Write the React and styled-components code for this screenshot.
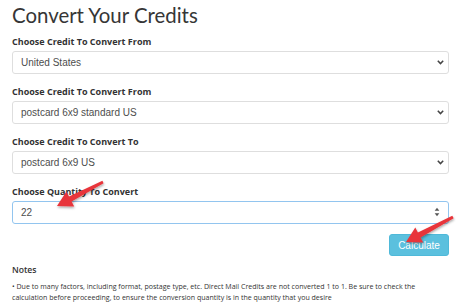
import React from "react";
import styled, { createGlobalStyle } from "styled-components";

const GlobalStyle = createGlobalStyle`
  * { box-sizing: border-box; }
  body {
    margin: 0;
    background: #ffffff;
    font-family: "Open Sans", "Noto Sans", sans-serif;
    color: #333333;
  }
`;

const Page = styled.div`
  position: relative;
  width: 456px;
  height: 306px;
  overflow: hidden;
  padding: 2px 7px 0 12px;
`;

const Title = styled.h2`
  margin: 0 0 6px;
  font-family: Lato, "Open Sans", sans-serif;
  font-size: 20.4px;
  font-weight: 400;
  line-height: 27px;
  color: #363636;
`;

const FormGroup = styled.div`
  margin-bottom: 11px;
`;

const Label = styled.label`
  display: block;
  font-size: 9px;
  font-weight: 700;
  line-height: 13px;
  margin-bottom: 3px;
  color: #333;
`;

const SelectWrap = styled.div`
  position: relative;
`;

const Select = styled.select`
  appearance: none;
  display: block;
  width: 100%;
  height: 23px;
  padding: 0 20px 0 8px;
  border: 1px solid #dedede;
  border-radius: 3px;
  background: #fff;
  font-family: "Liberation Sans", Arial, sans-serif;
  font-size: 10px;
  color: #4d4d4d;
  outline: none;
`;

const Chevron = styled.svg`
  position: absolute;
  right: 5px;
  top: 9px;
  pointer-events: none;
`;

const QuantityInput = styled.input`
  display: block;
  width: 100%;
  height: 23px;
  padding: 0 20px 0 8px;
  border: 1px solid #92c5ef;
  border-radius: 3px;
  background: #fff;
  font-family: "Liberation Sans", Arial, sans-serif;
  font-size: 10px;
  color: #4d4d4d;
  outline: none;
`;

const Spinner = styled.svg`
  position: absolute;
  right: 9px;
  top: 6px;
  pointer-events: none;
`;

const ButtonRow = styled.div`
  display: flex;
  justify-content: flex-end;
  margin-top: -1px;
`;

const CalcButton = styled.button`
  width: 60px;
  height: 22px;
  padding: 0;
  border: 1px solid #4fb9d9;
  border-radius: 3px;
  background: #5bc0de;
  color: #ffffff;
  font-family: "Liberation Sans", Arial, sans-serif;
  font-size: 10px;
`;

const Notes = styled.div`
  margin-top: 8px;
`;

const NotesTitle = styled.div`
  font-size: 8.6px;
  font-weight: 600;
  line-height: 12px;
  color: #333;
`;

const NotesText = styled.p`
  margin: 5px 0 0;
  font-size: 7.05px;
  line-height: 10.7px;
  color: #333;
`;

const ArrowLayer = styled.svg`
  position: absolute;
  left: 0;
  top: 0;
  pointer-events: none;
  overflow: visible;
`;

function arrowPoints(tail, tip) {
  const dx = tip[0] - tail[0];
  const dy = tip[1] - tail[1];
  const len = Math.hypot(dx, dy);
  const ux = dx / len;
  const uy = dy / len;
  const nx = -uy;
  const ny = ux;
  const headLen = 15;
  const headHalf = 8.5;
  const bx = tip[0] - ux * headLen;
  const by = tip[1] - uy * headLen;
  const p = (x, y) => `${x.toFixed(1)},${y.toFixed(1)}`;
  return [
    p(tail[0] + nx * 1.4, tail[1] + ny * 1.4),
    p(bx + nx * 2.8, by + ny * 2.8),
    p(bx + nx * headHalf, by + ny * headHalf),
    p(tip[0], tip[1]),
    p(bx - nx * headHalf, by - ny * headHalf),
    p(bx - nx * 2.8, by - ny * 2.8),
    p(tail[0] - nx * 1.4, tail[1] - ny * 1.4),
  ].join(" ");
}

const arrows = [
  { tail: [103, 182], tip: [57, 206] },
  { tail: [453, 217], tip: [406, 242] },
];

const fields = [
  { label: "Choose Credit To Convert From", value: "United States" },
  { label: "Choose Credit To Convert From", value: "postcard 6x9 standard US" },
  { label: "Choose Credit To Convert To", value: "postcard 6x9 US" },
];

export default function App() {
  return (
    <>
      <GlobalStyle />
      <Page>
        <Title>Convert Your Credits</Title>

        {fields.map((f, i) => (
          <FormGroup key={i}>
            <Label>{f.label}</Label>
            <SelectWrap>
              <Select defaultValue={f.value}>
                <option>{f.value}</option>
              </Select>
              <Chevron width="7" height="5" viewBox="0 0 7 5">
                <path d="M0.8 0.8 L3.5 3.6 L6.2 0.8" fill="none" stroke="#444" strokeWidth="1.5" />
              </Chevron>
            </SelectWrap>
          </FormGroup>
        ))}

        <FormGroup>
          <Label>Choose Quantity To Convert</Label>
          <SelectWrap>
            <QuantityInput type="text" defaultValue="22" />
            <Spinner width="6" height="10" viewBox="0 0 6 10">
              <path d="M3 0.8 L5.3 3.8 L0.7 3.8 Z" fill="#555" />
              <path d="M3 9.2 L5.3 6.2 L0.7 6.2 Z" fill="#555" />
            </Spinner>
          </SelectWrap>
        </FormGroup>

        <ButtonRow>
          <CalcButton>Calculate</CalcButton>
        </ButtonRow>

        <Notes>
          <NotesTitle>Notes</NotesTitle>
          <NotesText>
            • Due to many factors, including format, postage type, etc. Direct Mail Credits are not
            converted 1 to 1. Be sure to check the calculation before proceeding, to ensure the
            conversion quantity is in the quantity that you desire
          </NotesText>
        </Notes>

        <ArrowLayer width="456" height="306" viewBox="0 0 456 306">
          <defs>
            <filter id="arrowShadow" x="-20%" y="-20%" width="140%" height="140%">
              <feDropShadow dx="0.5" dy="1.5" stdDeviation="1.2" floodColor="#000" floodOpacity="0.35" />
            </filter>
          </defs>
          {arrows.map((a, i) => (
            <polygon key={i} points={arrowPoints(a.tail, a.tip)} fill="#e8363b" filter="url(#arrowShadow)" />
          ))}
        </ArrowLayer>
      </Page>
    </>
  );
}
